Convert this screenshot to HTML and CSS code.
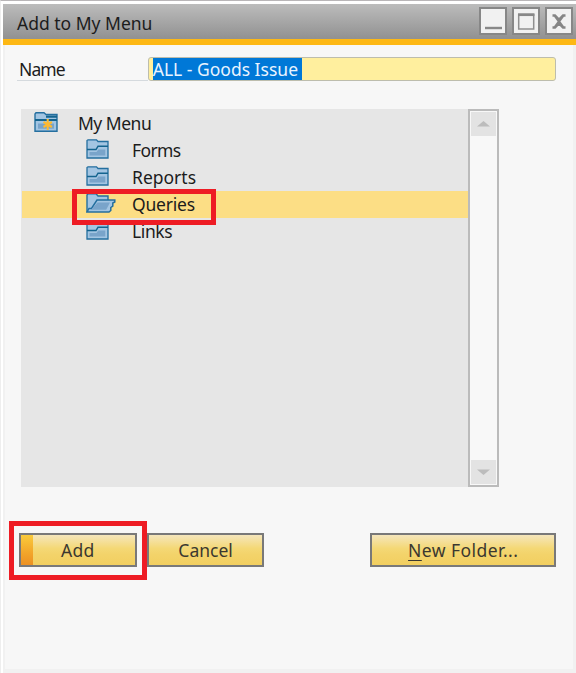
FILE: index.html
```html
<!DOCTYPE html>
<html lang="en">
<head>
<meta charset="utf-8">
<title>Add to My Menu</title>
<link rel="stylesheet" href="styles.css">
</head>
<body>
<svg class="defs" width="0" height="0" aria-hidden="true">
  <defs>
    <symbol id="folder" viewBox="0 0 23 20">
      <path d="M1 1.5 2 .8h8.5L12 2.5h10V19H1z" fill="#a3c5e2" stroke="#246f9f" stroke-width="1.3"/>
      <path d="M1 10.5h9l2-3.2h10" fill="none" stroke="#14648f" stroke-width="1.4"/>
      <path d="M3.5 13h7l1.8-2.5h7V16.5H3.5z" fill="#79a4ca"/>
    </symbol>
  </defs>
</svg>
<div class="window">
  <header class="titlebar">
    <h1 class="title">Add to My Menu</h1>
    <div class="controls">
      <button class="control" aria-label="Minimize"><svg width="24" height="24"><path d="M4 19h17" stroke="#888" stroke-width="2.4"/></svg></button>
      <button class="control" aria-label="Maximize"><svg width="24" height="24"><path d="M4.7 5.5h15V20h-15z" fill="none" stroke="#909090" stroke-width="1.5"/><path d="M4 5.7h16.4" stroke="#888" stroke-width="2.7"/></svg></button>
      <button class="control" aria-label="Close"><svg width="24" height="24"><path d="M5.5 6.5H8l4 4 4-4h2.5M5.5 18.5H8l4-4 4 4h2.5M8 7l8 11M16 7 8 18" fill="none" stroke="#858585" stroke-width="2.3"/></svg></button>
    </div>
  </header>
  <main class="content">
    <div class="field">
      <label class="field-label"><span class="t-name">Name</span></label>
      <div class="input"><span class="selection">ALL - Goods Issue</span></div>
    </div>
    <section class="tree-panel">
      <ul class="tree">
        <li class="row root">
          <svg class="icon" width="24" height="20" viewBox="0 0 24 20"><path d="M1 2 2 .8h8L12 2.5h11V19.2H1z" fill="#a3c5e2" stroke="#246f9f" stroke-width="1.4"/><path d="M12 4.7h11M1 8h22" stroke="#14648f" stroke-width="2.2"/><path d="M4 11.5h16v5.2H4z" fill="#79a4ca"/><path d="M13.7 7v11M9.5 10l8.4 5M17.9 10l-8.4 5" stroke="#fdb931" stroke-width="2.1"/></svg>
          <span class="text t-root">My Menu</span>
        </li>
        <li class="row"><svg class="icon" width="23" height="20"><use href="#folder"/></svg><span class="text t-forms">Forms</span></li>
        <li class="row"><svg class="icon" width="23" height="20"><use href="#folder"/></svg><span class="text t-reports">Reports</span></li>
        <li class="row selected">
          <svg class="icon" width="30" height="20" viewBox="0 0 30 20"><path d="M1 19V2L2 .8h8L12 3h10v4" fill="#a3c5e2" stroke="#246f9f" stroke-width="1.4"/><path d="M1 19 3 15.5h2.5L11 7h17.8v2l-2 1v3l-2 1.5v3L23 19z" fill="#a3c5e2" stroke="#246f9f" stroke-width="1.5"/><path d="M5 16.8 11.5 9.5H24l-3.8 7.3z" fill="#79a4ca"/></svg>
          <span class="text t-queries">Queries</span><span class="callout callout-row"></span>
        </li>
        <li class="row"><svg class="icon" width="23" height="20"><use href="#folder"/></svg><span class="text t-links">Links</span></li>
      </ul>
      <div class="scrollbar">
        <div class="arrow"><svg width="15" height="8"><path d="M1 6.5 7.5 1 14 6.5z" fill="#bcbcbc"/></svg></div>
        <div class="arrow"><svg width="15" height="8"><path d="M1 1.5h13L7.5 7z" fill="#bcbcbc"/></svg></div>
      </div>
    </section>
    <footer class="actions">
      <button class="button primary"><span class="t-add">Add</span><span class="callout callout-add"></span></button>
      <button class="button"><span class="t-cancel">Cancel</span></button>
      <button class="button wide"><span class="t-new"><u>N</u>ew Folder...</span></button>
    </footer>
  </main>
</div>
</body>
</html>
```
FILE: styles.css
```css
* { box-sizing: border-box; }
body {
  margin: 0;
  height: 673px;
  overflow: hidden;
  background: #fff;
  border-left: 1px solid #eee;
  border-top: 1px solid #b9b6b8;
  font: 17.5px/27px "Noto Sans", "Open Sans", sans-serif;
  color: #1c1c1c;
}
.defs { position: absolute; }
svg { display: block; flex: none; }
.window {
  margin: 3px 0 0 2px;
  height: 669px;
  display: flex;
  flex-direction: column;
}
.titlebar {
  flex: none;
  height: 41px;
  display: flex;
  justify-content: space-between;
  padding: 3px 3px 0 14px;
  background: linear-gradient(#bcbcbc, #929292 34px);
  border-bottom: 6px solid #fdb815;
}
.title { margin: 3px 0 0; font-size: inherit; font-weight: 400; line-height: 27px; }
.controls { display: flex; gap: 5px; }
.control {
  width: 28px;
  height: 28px;
  padding: 0;
  border: 2px solid #878787;
  background: #f1f1f1;
}
.content {
  flex: 1;
  padding: 12px 17px 0 14px;
  background: #f7f7f7;
  border: solid #f1f1f1;
  border-width: 0 3px 4px 2px;
}
.field { display: flex; height: 24px; margin-left: -2px; }
.field-label { width: 131px; height: 24px; padding-left: 2px; line-height: 25px; border-bottom: 1px solid #d5dade; }
.input {
  width: 409px;
  height: 24px;
  padding-left: 4px;
  background: #ffef9e;
  border: 1px solid #bdbdad;
  border-radius: 3px;
}
.selection { display: block; width: 149px; height: 22px; line-height: 23px; background: #0078d7; color: #e9f4ff; white-space: nowrap; }
.tree-panel { display: flex; width: 478px; height: 378px; margin: 28px 0 0 2px; background: #e6e6e6; }
.tree { flex: 1; margin: 0; padding: 1px 0 0; list-style: none; }
.row { position: relative; display: flex; align-items: flex-start; height: 27px; margin-left: 1px; padding-left: 64px; }
.row .icon { margin-top: 2px; }
.row .text { margin-left: 23px; white-space: nowrap; }
.root { padding-left: 12px; }
.root .text { margin-left: 20px; }
.selected { background: #fcde85; }
.selected .icon { margin-right: -7px; }
.t-name { letter-spacing: -0.9px; }
.t-root { letter-spacing: -0.5px; }
.t-forms { letter-spacing: -0.6px; }
.t-queries { letter-spacing: -0.2px; }
.t-links { letter-spacing: -0.4px; }
.t-add { letter-spacing: 0.3px; }
.t-new { letter-spacing: 0.45px; }
.scrollbar {
  width: 31px;
  padding: 1px;
  display: flex;
  flex-direction: column;
  justify-content: space-between;
  background: #f8f8f8;
  border: 2px solid #bbb;
}
.arrow { height: 24px; display: grid; place-items: center; background: #e3e3e3; }
.actions { display: flex; margin-top: 46px; padding-left: 0; gap: 10px; }
.button {
  position: relative;
  width: 118px;
  height: 34px;
  padding: 0;
  border: 2px solid #797979;
  background: linear-gradient(#f5e6bc, #f4d875 45%, #f3d36a 65%, #f2cf60);
  font: inherit;
  color: #3b3830;
}
.button > span:first-child { display: inline-block; line-height: 28px; vertical-align: top; white-space: nowrap; }
.primary::before { content: ""; position: absolute; left: 0; top: 0; width: 12px; height: 100%; background: linear-gradient(#facb3c, #f2a52a 60%, #ec9022); }
.wide { width: 186px; margin-left: 96px; }
u { text-decoration-thickness: 1px; text-underline-offset: 3px; }
.callout { position: absolute; z-index: 1; border: 5px solid #ee1c24; pointer-events: none; }
.callout-row { left: 50px; top: -2px; width: 144px; height: 36px; }
.callout-add { left: -12px; top: -14px; width: 138px; height: 59px; }
```
